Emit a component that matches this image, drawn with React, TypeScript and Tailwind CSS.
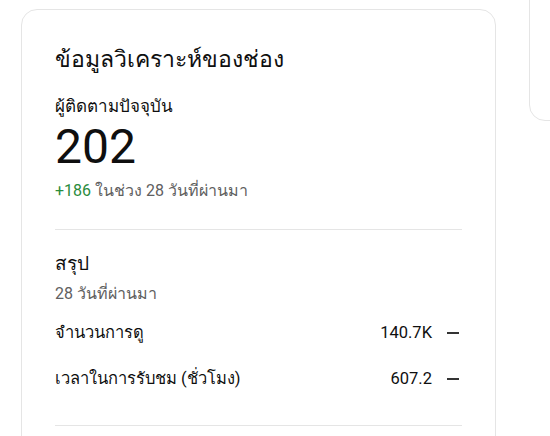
const rows = [
  { label: "จำนวนการดู", value: "140.7K" },
  { label: "เวลาในการรับชม (ชั่วโมง)", value: "607.2" },
];

const App = () => {
  return (
    <main className="flex h-[436px] w-[550px] items-start gap-[33px] overflow-hidden bg-white pl-[21px] font-['Roboto','Noto_Sans',sans-serif] text-[#0f0f0f]">
      <section className="mt-[9px] h-[460px] w-[475px] shrink-0 rounded-2xl border border-[#e5e5e5] pl-[33px] pt-[34px]">
        <h1 className="text-[23px] leading-[32px]">ข้อมูลวิเคราะห์ของช่อง</h1>
        <p className="mt-[18px] text-[17px] leading-[24px]">ผู้ติดตามปัจจุบัน</p>
        <p className="mt-px text-[48px] leading-[56px]">202</p>
        <p className="mt-[6px] text-[16px] leading-[20px] text-[#606060]">
          <span className="text-[#2a8c3d]">+186</span> ในช่วง 28 วันที่ผ่านมา
        </p>
        <div className="mt-[28px] h-px w-[407px] bg-[#e5e5e5]" />
        <h2 className="mt-[20px] text-[19px] font-medium leading-[28px]">สรุป</h2>
        <p className="mt-[6px] text-[16px] leading-[20px] text-[#606060]">28 วันที่ผ่านมา</p>
        <div className="mt-[17px] flex w-[404px] flex-col gap-[22px]">
          {rows.map((r) => (
            <div key={r.label} className="flex items-center justify-between text-[16.5px] leading-[24px]">
              <span>{r.label}</span>
              <div className="flex items-center gap-[15px]">
                <span>{r.value}</span>
                <div className="h-[1.5px] w-[12px] bg-[#333]" />
              </div>
            </div>
          ))}
        </div>
        <div className="mt-[34px] h-px w-[407px] bg-[#e5e5e5]" />
      </section>
      <aside className="-mt-[20px] h-[141px] w-[60px] shrink-0 rounded-2xl border border-[#e5e5e5]" />
    </main>
  );
};

export default App;
